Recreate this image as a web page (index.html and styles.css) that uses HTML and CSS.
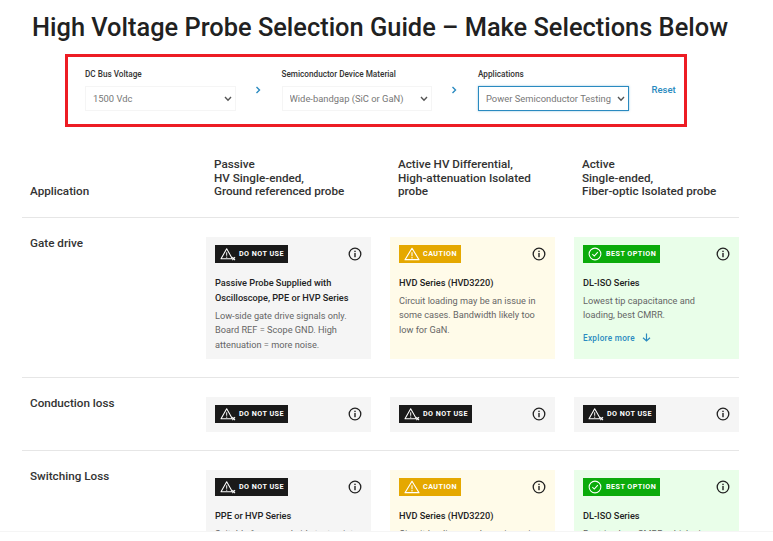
FILE: index.html
```html
<!DOCTYPE html>
<html lang="en">
  <head>
    <meta charset="UTF-8" />
    <meta name="viewport" content="width=device-width, initial-scale=1.0" />
    <title>High Voltage Probe Selection Guide</title>
    <link rel="stylesheet" href="styles.css">
  </head>
  <body>
    <svg class="defs" width="0" height="0">
      <symbol id="info" viewBox="0 0 14 14">
        <circle cx="7" cy="7" r="5.8" fill="none" stroke="currentColor" stroke-width="1.3" />
        <rect x="6.3" y="6" width="1.4" height="4.2" fill="currentColor" />
        <rect x="6.3" y="3.7" width="1.4" height="1.4" fill="currentColor" />
      </symbol>
      <symbol id="warn" viewBox="0 0 18 16">
        <path d="M7.5 2 L14 13.5 H1 Z" fill="none" stroke="currentColor" stroke-width="1.2" stroke-linejoin="round" />
        <path d="M7.5 6 V10 M7.5 11 V12.3" stroke="currentColor" stroke-width="1.1" />
        <path d="M14 11.5 L17 15 M17 11.5 L14 15" stroke="currentColor" stroke-width="1.2" />
      </symbol>
      <symbol id="caution" viewBox="0 0 18 16">
        <path d="M9 1.5 L17 14.5 H1 Z" fill="none" stroke="currentColor" stroke-width="1.3" stroke-linejoin="round" />
        <path d="M9 6 V10.5 M9 11.5 V13" stroke="currentColor" stroke-width="1.2" />
      </symbol>
      <symbol id="check" viewBox="0 0 16 16">
        <circle cx="8" cy="8" r="6.7" fill="none" stroke="currentColor" stroke-width="1.2" />
        <path d="M5 8.2 L7.2 10.4 L11.2 5.8" fill="none" stroke="currentColor" stroke-width="1.2" />
      </symbol>
    </svg>

    <main class="page">
      <h1 class="title">High Voltage Probe Selection Guide – Make Selections Below</h1>

      <form class="filters">
        <div class="field">
          <label for="voltage">DC Bus Voltage</label>
          <select id="voltage"><option>1500 Vdc</option></select>
        </div>
        <svg class="next" viewBox="0 0 46 10"><path d="M20.5 2 L23.5 5 L20.5 8" /></svg>
        <div class="field">
          <label for="material">Semiconductor Device Material</label>
          <select id="material"><option>Wide-bandgap (SiC or GaN)</option></select>
        </div>
        <svg class="next" viewBox="0 0 46 10"><path d="M20.5 2 L23.5 5 L20.5 8" /></svg>
        <div class="field">
          <label for="application">Applications</label>
          <select id="application" class="active"><option>Power Semiconductor Testing</option></select>
        </div>
        <a class="reset" href="#">Reset</a>
      </form>

      <section class="guide">
        <div class="row head">
          <div>Application</div>
          <div>Passive<br>HV Single-ended,<br>Ground referenced probe</div>
          <div>Active HV Differential,<br>High-attenuation Isolated<br>probe</div>
          <div>Active<br>Single-ended,<br>Fiber-optic Isolated probe</div>
        </div>

        <div class="row">
          <div class="name">Gate drive</div>
          <div class="card no">
            <div class="card-top">
              <span class="badge"><svg class="badge-icon"><use href="#warn" /></svg>DO NOT USE</span>
              <svg class="info"><use href="#info" /></svg>
            </div>
            <h3>Passive Probe Supplied with Oscilloscope, PPE or HVP Series</h3>
            <p>Low-side gate drive signals only. Board REF = Scope GND. High attenuation = more noise.</p>
          </div>
          <div class="card warn">
            <div class="card-top">
              <span class="badge"><svg class="badge-icon"><use href="#caution" /></svg>CAUTION</span>
              <svg class="info"><use href="#info" /></svg>
            </div>
            <h3>HVD Series (HVD3220)</h3>
            <p>Circuit loading may be an issue in some cases. Bandwidth likely too low for GaN.</p>
          </div>
          <div class="card best">
            <div class="card-top">
              <span class="badge"><svg class="badge-icon check"><use href="#check" /></svg>BEST OPTION</span>
              <svg class="info"><use href="#info" /></svg>
            </div>
            <h3>DL-ISO Series</h3>
            <p>Lowest tip capacitance and loading, best CMRR.</p>
            <a class="more" href="#">Explore more
              <svg class="arrow" viewBox="0 0 9 9"><path d="M4.5 0.5 V8 M1 4.8 L4.5 8 L8 4.8" /></svg>
            </a>
          </div>
        </div>

        <div class="row">
          <div class="name">Conduction loss</div>
          <div class="card no short">
            <div class="card-top">
              <span class="badge"><svg class="badge-icon"><use href="#warn" /></svg>DO NOT USE</span>
              <svg class="info"><use href="#info" /></svg>
            </div>
          </div>
          <div class="card no short">
            <div class="card-top">
              <span class="badge"><svg class="badge-icon"><use href="#warn" /></svg>DO NOT USE</span>
              <svg class="info"><use href="#info" /></svg>
            </div>
          </div>
          <div class="card no short">
            <div class="card-top">
              <span class="badge"><svg class="badge-icon"><use href="#warn" /></svg>DO NOT USE</span>
              <svg class="info"><use href="#info" /></svg>
            </div>
          </div>
        </div>

        <div class="row">
          <div class="name">Switching Loss</div>
          <div class="card no">
            <div class="card-top">
              <span class="badge"><svg class="badge-icon"><use href="#warn" /></svg>DO NOT USE</span>
              <svg class="info"><use href="#info" /></svg>
            </div>
            <h3>PPE or HVP Series</h3>
            <p>Suitable for ground-side test points only.</p>
          </div>
          <div class="card warn">
            <div class="card-top">
              <span class="badge"><svg class="badge-icon"><use href="#caution" /></svg>CAUTION</span>
              <svg class="info"><use href="#info" /></svg>
            </div>
            <h3>HVD Series (HVD3220)</h3>
            <p>Circuit loading may be an issue in some cases.</p>
          </div>
          <div class="card best">
            <div class="card-top">
              <span class="badge"><svg class="badge-icon check"><use href="#check" /></svg>BEST OPTION</span>
              <svg class="info"><use href="#info" /></svg>
            </div>
            <h3>DL-ISO Series</h3>
            <p>Best-in-class CMRR, which gives clean results.</p>
          </div>
        </div>
      </section>
    </main>
  </body>
</html>
```

FILE: styles.css
```css
* {
  margin: 0;
  padding: 0;
  box-sizing: border-box;
}
html,
body {
  height: 100%;
  overflow: hidden;
}
body {
  font-family: Roboto, "Liberation Sans", sans-serif;
  background: #fff;
  color: #212121;
}
.defs {
  display: block;
  height: 0;
}
.page {
  height: 532px;
  overflow: hidden;
  border-bottom: 1px solid #f5f5f5;
}

/* ------------ Title and filters ------------ */
.title {
  height: 54px;
  padding: 12px 13px 0 0;
  text-align: center;
  font-size: 25.4px;
  line-height: 30px;
  font-weight: 500;
}
.filters {
  display: flex;
  align-items: flex-start;
  width: 622px;
  height: 73px;
  margin-left: 65px;
  padding: 12px 0 0 17px;
  border: 3px solid #ed1c24;
}
.field {
  display: flex;
  flex-direction: column;
  gap: 6px;
  width: 150.5px;
}
.field label {
  font-size: 8.2px;
  line-height: 11px;
  font-weight: 500;
  color: #333;
}
.field select {
  appearance: none;
  width: 100%;
  height: 25px;
  padding-left: 7px;
  border: 1px solid #f5f5f5;
  border-radius: 0;
  background: #fff url("data:image/svg+xml,%3Csvg xmlns='http://www.w3.org/2000/svg' width='8' height='6'%3E%3Cpath d='M1 1 L4 4.2 L7 1' fill='none' stroke='%23555' stroke-width='1.4'/%3E%3C/svg%3E") no-repeat right 3px center;
  font-family: inherit;
  font-size: 9.4px;
  color: #777;
  outline: none;
}
.field select.active {
  border: 1px solid #2a8ac0;
  box-shadow: 0 0 2px rgba(42, 138, 192, 0.5);
}
.next {
  flex: none;
  width: 46px;
  height: 10px;
  margin-top: 16px;
  fill: none;
  stroke: #2a8ac0;
  stroke-width: 1.4;
}
.reset {
  margin: 15px 0 0 23px;
  font-size: 9.5px;
  line-height: 12px;
  font-weight: 500;
  color: #2a8ac0;
  text-decoration: none;
}

/* ------------ Guide table ------------ */
.guide {
  width: 717px;
  margin: 31px 0 0 22px;
}
.row {
  display: grid;
  grid-template-columns: repeat(4, 165px);
  column-gap: 19px;
  padding: 19px 0 18px;
  border-bottom: 1px solid #e6e6e6;
}
.head {
  padding: 0 0 18px;
  font-size: 11.7px;
  line-height: 13.5px;
  font-weight: 500;
  align-items: end;
  color: #333;
}
.head > div,
.name {
  padding-left: 8px;
}
.name {
  font-size: 11.7px;
  line-height: 12px;
  font-weight: 500;
  color: #333;
}

/* ------------ Cards ------------ */
.card {
  min-height: 122px;
  padding: 8px 9px 0;
}
.card.short {
  min-height: 35px;
}
.card.no {
  background: #f5f5f5;
}
.card.warn {
  background: #fffbe9;
}
.card.best {
  background: #e9fee9;
}
.card-top {
  display: flex;
  justify-content: space-between;
  align-items: center;
  height: 18px;
}
.badge {
  display: inline-flex;
  align-items: center;
  height: 18px;
  padding: 0 4px 0 5px;
  gap: 3px;
  font-size: 7.2px;
  font-weight: 700;
  letter-spacing: 0.45px;
  color: #fff;
}
.no .badge {
  background: #1a1a1a;
}
.warn .badge {
  background: #e5a800;
}
.best .badge {
  background: #0bab0b;
}
.badge-icon {
  width: 16px;
  height: 14px;
}
.badge-icon.check {
  width: 14px;
  height: 14px;
  margin-right: 1px;
}
.info {
  width: 14px;
  height: 14px;
  color: #222;
}
.card h3 {
  margin-top: 12px;
  font-size: 9.2px;
  line-height: 15px;
  font-weight: 500;
  color: #222;
}
.card p {
  max-width: 145px;
  margin-top: 4px;
  font-size: 9.2px;
  line-height: 14.5px;
  color: #666;
}
.more {
  display: flex;
  align-items: center;
  gap: 7px;
  margin-top: 9px;
  font-size: 8.2px;
  line-height: 12px;
  font-weight: 500;
  letter-spacing: 0.3px;
  color: #2a8ac0;
  text-decoration: none;
}
.arrow {
  width: 9px;
  height: 9px;
  fill: none;
  stroke: #2a8ac0;
  stroke-width: 1.2;
}
```
